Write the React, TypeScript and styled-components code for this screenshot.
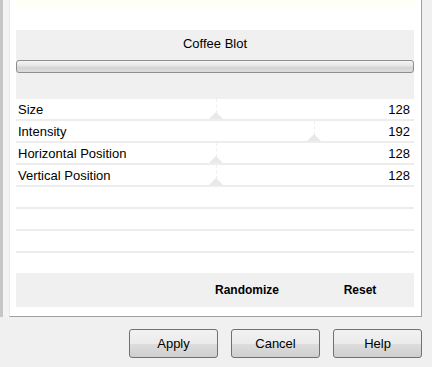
import React from "react";
import styled, { createGlobalStyle } from "styled-components";

const GlobalStyle = createGlobalStyle`
  html, body {
    margin: 0;
    padding: 0;
    background: #f0f0f0;
  }
  body {
    font-family: "Liberation Sans", Arial, sans-serif;
    color: #000;
  }
`;

const Window = styled.div`
  width: 432px;
  height: 367px;
  display: flex;
  flex-direction: column;
  background: #f0f0f0;
  overflow: hidden;
`;

const Main = styled.div`
  display: flex;
  height: 317px;
`;

const LeftStrip = styled.div`
  width: 6px;
  border-left: 3px solid #c6c6c6;
  background: #f3f3f3;
`;

const Panel = styled.div`
  width: 398px;
  padding: 0 7px 8px 6px;
  background: #fff;
  border-left: 1px solid #e8e8e8;
  border-right: 1px solid #a0a0a0;
  border-bottom: 1px solid #a0a0a0;
  display: flex;
  flex-direction: column;
`;

const TopSpace = styled.div`
  height: 30px;
  background: linear-gradient(#fffff4, #ffffff 35%);
`;

const TitleBox = styled.div`
  height: 69px;
  background: #f0f0f0;
  padding-top: 6px;
  box-sizing: border-box;
`;

const Title = styled.div`
  font-size: 13px;
  line-height: 16px;
  text-align: center;
`;

const Bar = styled.div`
  margin-top: 8px;
  height: 13px;
  box-sizing: border-box;
  border: 1px solid #8e8e8e;
  border-radius: 3px;
  background: linear-gradient(#f6f6f6, #e4e4e4 45%, #d4d4d4 60%, #dcdcdc);
`;

const Row = styled.div`
  position: relative;
  height: 20px;
  border-bottom: 2px solid #ededed;
  display: flex;
  align-items: center;
  justify-content: space-between;
  padding: 0 4px 0 2px;
  font-size: 13px;
`;

const Label = styled.span`
  position: relative;
  z-index: 1;
`;

const Value = styled.span`
  position: relative;
  z-index: 1;
`;

const Thumb = styled.div`
  position: absolute;
  top: 0;
  bottom: 0;
  width: 15px;
  margin-left: -7px;

  &::before {
    content: "";
    position: absolute;
    left: 7px;
    top: 0;
    bottom: 6px;
    border-left: 1px dashed #efefef;
  }

  &::after {
    content: "";
    position: absolute;
    left: 0;
    bottom: 0;
    border-left: 7px solid transparent;
    border-right: 7px solid transparent;
    border-bottom: 7px solid #e9e9e9;
  }
`;

const Spacer = styled.div`
  height: 20px;
`;

const ActionBar = styled.div`
  height: 34px;
  background: #f0f0f0;
  display: flex;
  justify-content: flex-end;
  align-items: center;
  font-size: 12px;
  font-weight: bold;
`;

const Action = styled.div<{ $w: number }>`
  width: ${({ $w }) => $w}px;
  text-align: center;
`;

const RightStrip = styled.div`
  flex: 1;
  background: #f0f0f0;
`;

const Footer = styled.div`
  display: flex;
  justify-content: flex-end;
  gap: 13px;
  padding: 12px 10px 0 0;
`;

const Button = styled.button`
  width: 89px;
  height: 29px;
  border: 1px solid #707070;
  border-radius: 3px;
  background: linear-gradient(#f2f2f2 0%, #ebebeb 50%, #dddddd 51%, #cfcfcf 100%);
  font-family: "Liberation Sans", Arial, sans-serif;
  font-size: 13px;
  color: #000;
  padding: 0;
`;

const params = [
  { name: "Size", value: 128 },
  { name: "Intensity", value: 192 },
  { name: "Horizontal Position", value: 128 },
  { name: "Vertical Position", value: 128 },
];

const App: React.FC = () => {
  return (
    <Window>
      <GlobalStyle />
      <Main>
        <LeftStrip />
        <Panel>
          <TopSpace />
          <TitleBox>
            <Title>Coffee Blot</Title>
            <Bar />
          </TitleBox>
          {params.map((p) => (
            <Row key={p.name}>
              <Thumb style={{ left: 3 + (p.value / 255) * 392 }} />
              <Label>{p.name}</Label>
              <Value>{p.value}</Value>
            </Row>
          ))}
          <Row />
          <Row />
          <Row />
          <Spacer />
          <ActionBar>
            <Action $w={118}>Randomize</Action>
            <Action $w={108}>Reset</Action>
          </ActionBar>
        </Panel>
        <RightStrip />
      </Main>
      <Footer>
        <Button>Apply</Button>
        <Button>Cancel</Button>
        <Button>Help</Button>
      </Footer>
    </Window>
  );
};

export default App;
